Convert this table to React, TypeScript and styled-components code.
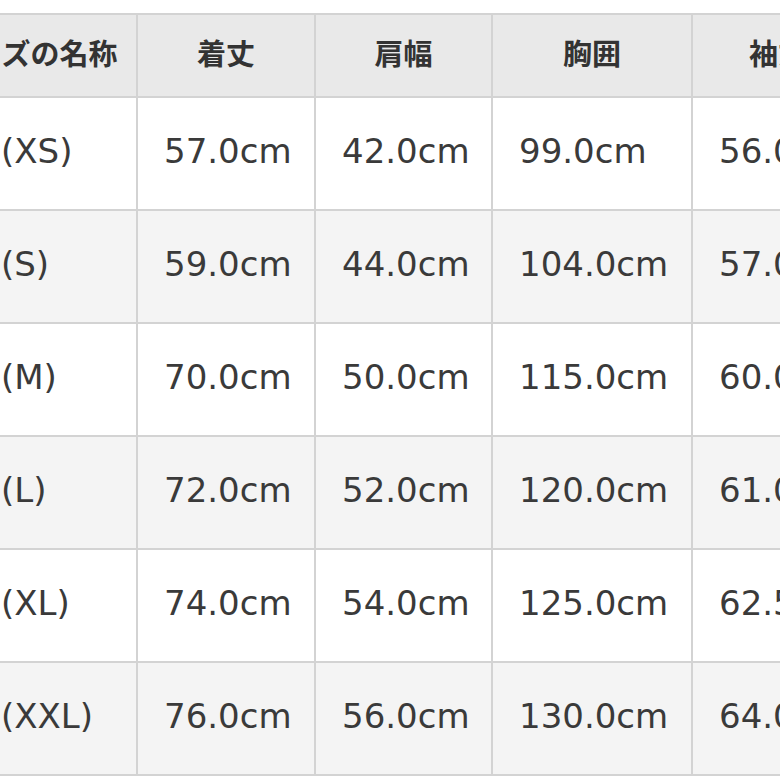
import styled, { createGlobalStyle } from 'styled-components';

const GlobalStyle = createGlobalStyle`
  html, body {
    margin: 0;
    padding: 0;
    background: #ffffff;
  }
  body {
    font-family: "DejaVu Sans", "Noto Sans CJK JP", sans-serif;
    color: #333333;
  }
`;

const headers = ['サイズの名称', '着丈', '肩幅', '胸囲', '袖丈'];

const rows = [
  ['(XS)', '57.0cm', '42.0cm', '99.0cm', '56.0cm'],
  ['(S)', '59.0cm', '44.0cm', '104.0cm', '57.0cm'],
  ['(M)', '70.0cm', '50.0cm', '115.0cm', '60.0cm'],
  ['(L)', '72.0cm', '52.0cm', '120.0cm', '61.0cm'],
  ['(XL)', '74.0cm', '54.0cm', '125.0cm', '62.5cm'],
  ['(XXL)', '76.0cm', '56.0cm', '130.0cm', '64.0cm'],
];

export default function App() {
  return (
    <>
      <GlobalStyle />
      <Viewport>
        <SizeTable role="table">
          {headers.map((h) => (
            <HeadCell key={h} role="columnheader">
              {h}
            </HeadCell>
          ))}
          {rows.map((row, i) =>
            row.map((value, j) => (
              <BodyCell key={`${i}-${j}`} role="cell" $striped={i % 2 === 1} $first={j === 0}>
                {value}
              </BodyCell>
            ))
          )}
        </SizeTable>
      </Viewport>
    </>
  );
}

const Viewport = styled.div`
  width: 780px;
  height: 780px;
  overflow: hidden;
  padding-top: 13px;
  box-sizing: border-box;
`;

const SizeTable = styled.div`
  display: grid;
  grid-template-columns: 210px 176px 175px 198px 170px;
  grid-template-rows: 81px repeat(6, 111px);
  gap: 2px;
  padding: 2px;
  background: #d3d3d3;
  width: max-content;
  margin-left: -76px;
`;

const HeadCell = styled.div`
  background: #e9e9e9;
  display: flex;
  align-items: center;
  justify-content: center;
  font-family: "Noto Sans CJK JP", sans-serif;
  font-weight: 700;
  font-size: 29px;
  color: #333333;
  padding-bottom: 7px;
  white-space: nowrap;
`;

const BodyCell = styled.div<{ $striped: boolean; $first: boolean }>`
  background: ${(p) => (p.$striped ? '#f4f4f4' : '#ffffff')};
  display: flex;
  align-items: center;
  padding-left: ${(p) => (p.$first ? '75px' : '26px')};
  padding-bottom: 6px;
  font-family: "DejaVu Sans", sans-serif;
  font-size: 34px;
  color: #3a3a3a;
  white-space: nowrap;
`;
